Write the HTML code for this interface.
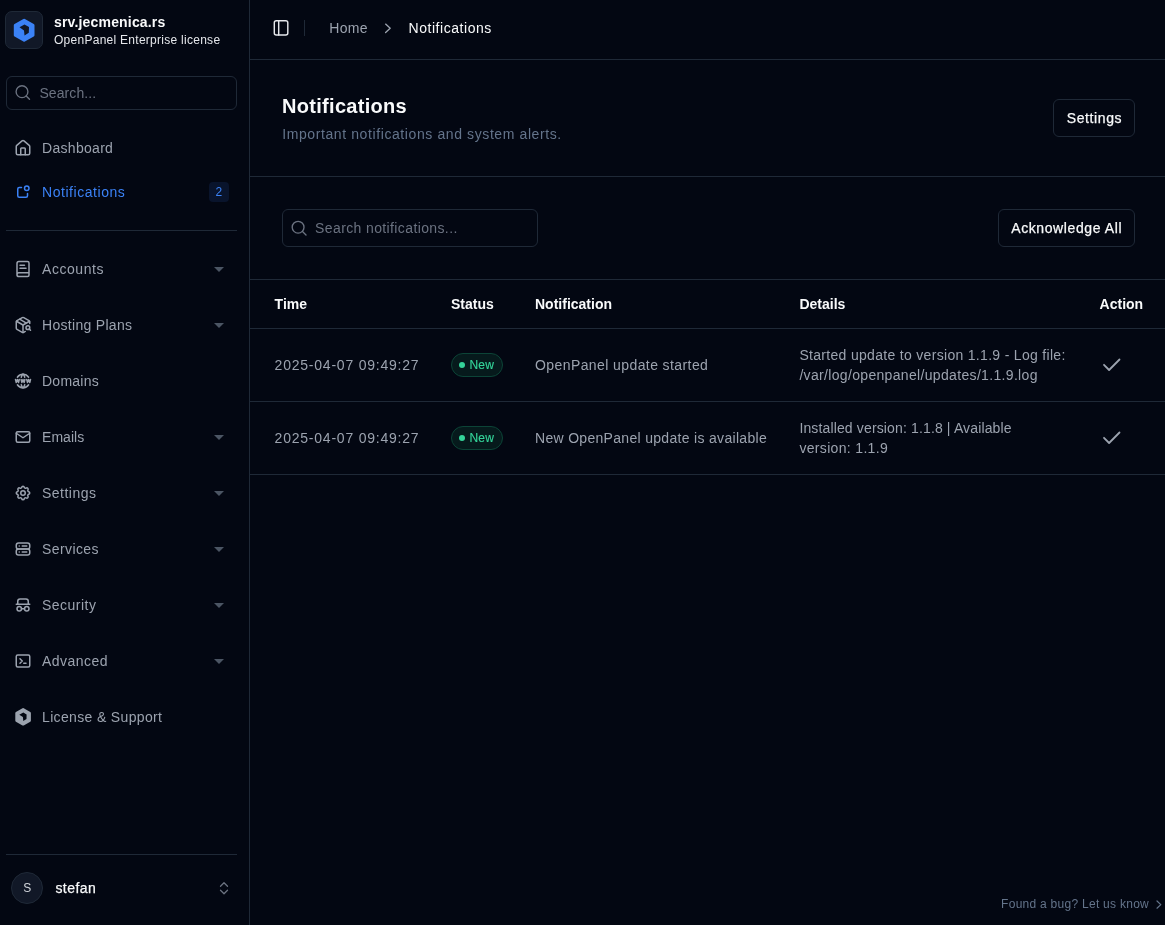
<!DOCTYPE html>
<html><head><meta charset="utf-8">
<style>
*{box-sizing:border-box;margin:0;padding:0}
html,body{width:1165px;height:925px;overflow:hidden;background:#030712;font-family:"Liberation Sans",sans-serif;color:#f9fafb}
.a{position:absolute;white-space:nowrap}
svg.i{position:absolute;width:18px;height:18px;fill:none;stroke:currentColor;stroke-width:2;stroke-linecap:round;stroke-linejoin:round}
#side{position:absolute;left:0;top:0;width:250px;height:925px;border-right:1px solid #1f2937;background:#030712}
.logo{position:absolute;left:5px;top:11px;width:38px;height:38px;border-radius:7px;background:#111827;border:1px solid #1f2937}
.brand{position:absolute;left:54px;top:13.5px;font-size:14px;font-weight:bold;color:#f9fafb;white-space:nowrap;letter-spacing:0.17px}
.brand2{position:absolute;left:54px;top:32.8px;font-size:12px;color:#e5e7eb;white-space:nowrap;letter-spacing:0.27px}
.ssearch{position:absolute;left:6px;top:76px;width:231px;height:34px;border:1px solid #1f2937;border-radius:6px}
.nav{position:absolute;left:0;width:249px;height:20px;font-size:14px;color:#9ca3af}
.nav .t{position:absolute;left:42px;top:2px;white-space:nowrap;letter-spacing:0.4px}
.car{position:absolute;left:214px;top:267px;width:0;height:0;border-left:5px solid transparent;border-right:5px solid transparent;border-top:5px solid #4b5563}
.hr{position:absolute;height:1px;background:#1f2937}
.btn{position:absolute;border:1px solid #1f2937;border-radius:6px;background:#030712}
.bt{position:absolute;font-size:14px;color:#f9fafb;white-space:nowrap;letter-spacing:0.55px;-webkit-text-stroke:0.25px #f9fafb}
.th{position:absolute;top:296.2px;font-size:14px;font-weight:bold;color:#f9fafb;white-space:nowrap}
.td{position:absolute;font-size:14px;color:#9ca3af;white-space:nowrap;letter-spacing:0.33px}
.badge{position:absolute;left:451px;width:52px;height:24px;border-radius:12px;background:#061a1c;border:1px solid #0c4437}
.badge i{position:absolute;left:7px;top:8px;width:6px;height:6px;border-radius:3px;background:#34d399}
.badge span{position:absolute;left:17.4px;top:3.9px;font-size:12px;color:#34d399;white-space:nowrap;letter-spacing:0.2px;-webkit-text-stroke:0.15px #34d399}
</style></head><body>
<div id="root" style="position:absolute;left:0;top:0;width:1165px;height:925px;will-change:transform">
<div id="side">
  <div class="logo"></div>
  <div class="brand">srv.jecmenica.rs</div>
  <div class="brand2">OpenPanel Enterprise license</div>
  <div class="ssearch"></div>
  <div class="a" style="left:39.4px;top:84.6px;font-size:14px;color:#6b7280;letter-spacing:0.1px">Search...</div>
  <div class="nav" style="top:138px"><span class="t" style="letter-spacing:0.3px">Dashboard</span></div>
  <div class="nav" style="top:182px;color:#3b82f6"><span class="t" style="letter-spacing:0.55px">Notifications</span></div>
  <div class="a" style="left:209px;top:182px;width:20px;height:20px;border-radius:4px;background:#09142c"></div>
  <div class="a" style="left:215.5px;top:184.6px;font-size:12px;color:#3b82f6">2</div>
  <div class="hr" style="left:6px;top:230px;width:231px"></div>
  <div class="nav" style="top:259px"><span class="t" style="letter-spacing:0.55px">Accounts</span></div>
  <div class="nav" style="top:315px"><span class="t" style="letter-spacing:0.3px">Hosting Plans</span></div>
  <div class="nav" style="top:371px"><span class="t" style="letter-spacing:0.25px">Domains</span></div>
  <div class="nav" style="top:427px"><span class="t" style="letter-spacing:0.05px">Emails</span></div>
  <div class="nav" style="top:483px"><span class="t" style="letter-spacing:0.48px">Settings</span></div>
  <div class="nav" style="top:539px"><span class="t" style="letter-spacing:0.4px">Services</span></div>
  <div class="nav" style="top:595px"><span class="t" style="letter-spacing:0.48px">Security</span></div>
  <div class="nav" style="top:651px"><span class="t" style="letter-spacing:0.48px">Advanced</span></div>
  <div class="nav" style="top:707px"><span class="t" style="letter-spacing:0.35px">License &amp; Support</span></div>
  <i class="car" style="top:267px"></i>
  <i class="car" style="top:323px"></i>
  <i class="car" style="top:435px"></i>
  <i class="car" style="top:491px"></i>
  <i class="car" style="top:547px"></i>
  <i class="car" style="top:603px"></i>
  <i class="car" style="top:659px"></i>
  <div class="hr" style="left:6px;top:854px;width:231px"></div>
  <div class="a" style="left:11px;top:872px;width:32px;height:32px;border-radius:16px;background:#111827;border:1px solid #1f2937"></div>
  <div class="a" style="left:23.3px;top:881px;font-size:12px;color:#d1d5db">S</div>
  <div class="a" style="left:55.4px;top:880px;font-size:14px;color:#f9fafb;letter-spacing:0.45px;-webkit-text-stroke:0.25px #f9fafb">stefan</div>
</div>

<!-- main -->
<div class="hr" style="left:250px;top:59px;width:915px"></div>
<div class="a" style="left:304px;top:20px;width:1px;height:16px;background:#1f2937"></div>
<div class="a" style="left:329.3px;top:20.2px;font-size:14px;color:#9ca3af;letter-spacing:0.3px">Home</div>
<div class="a" style="left:408.5px;top:20.2px;font-size:14px;color:#f9fafb;letter-spacing:0.55px">Notifications</div>
<div class="a" style="left:282px;top:94.6px;font-size:20px;font-weight:bold;color:#f9fafb;letter-spacing:0.3px">Notifications</div>
<div class="a" style="left:282.2px;top:126.2px;font-size:14px;color:#64748b;letter-spacing:0.6px">Important notifications and system alerts.</div>
<div class="btn" style="left:1053px;top:99px;width:82px;height:38px"></div>
<div class="bt" style="left:1066.8px;top:109.5px;letter-spacing:0.6px">Settings</div>
<div class="hr" style="left:250px;top:176px;width:915px"></div>
<div class="a" style="left:282px;top:209px;width:256px;height:38px;border:1px solid #1f2937;border-radius:6px"></div>
<div class="a" style="left:315.1px;top:220.2px;font-size:14px;color:#6b7280;letter-spacing:0.38px">Search notifications...</div>
<div class="btn" style="left:998px;top:209px;width:137px;height:38px"></div>
<div class="bt" style="left:1011.2px;top:219.5px;letter-spacing:0.6px">Acknowledge All</div>
<div class="hr" style="left:250px;top:279px;width:915px"></div>
<div class="th" style="left:274.6px">Time</div>
<div class="th" style="left:451px">Status</div>
<div class="th" style="left:535px">Notification</div>
<div class="th" style="left:799.4px">Details</div>
<div class="th" style="left:1099.6px">Action</div>
<div class="hr" style="left:250px;top:328px;width:915px"></div>
<div class="td" style="left:274.6px;top:356.6px;letter-spacing:0.78px">2025-04-07 09:49:27</div>
<div class="badge" style="top:353px"><i></i><span>New</span></div>
<div class="td" style="left:535px;top:356.6px;letter-spacing:0.41px">OpenPanel update started</div>
<div class="td" style="left:799.4px;top:346.8px;letter-spacing:0.31px">Started update to version 1.1.9 - Log file:</div>
<div class="td" style="left:799.4px;top:366.8px;letter-spacing:0.33px">/var/log/openpanel/updates/1.1.9.log</div>
<div class="hr" style="left:250px;top:401px;width:915px"></div>
<div class="td" style="left:274.6px;top:429.6px;letter-spacing:0.78px">2025-04-07 09:49:27</div>
<div class="badge" style="top:426px"><i></i><span>New</span></div>
<div class="td" style="left:535px;top:429.6px;letter-spacing:0.31px">New OpenPanel update is available</div>
<div class="td" style="left:799.4px;top:419.8px;letter-spacing:0.14px">Installed version: 1.1.8 | Available</div>
<div class="td" style="left:799.4px;top:439.8px;letter-spacing:0.33px">version: 1.1.9</div>
<div class="hr" style="left:250px;top:474px;width:915px"></div>
<div class="a" style="left:1001.1px;top:896.6px;font-size:12px;color:#64748b;letter-spacing:0.27px">Found a bug? Let us know</div>

<!-- ICONS -->
<svg class="a" style="left:0;top:0" width="1165" height="925" viewBox="0 0 1165 925" fill="none" stroke-linecap="round" stroke-linejoin="round">
  <!-- logo hexagon -->
  <path d="M24.15 20.2 L33 25.2 L33 35.3 L24.15 40.3 L15.3 35.3 L15.3 25.2 Z" fill="#3b82f6" stroke="#3b82f6" stroke-width="3"/>
  <path d="M19.5 27.3 L24.5 24.4 L29 27 L28.8 32.8 L24.5 35.6 L24 30.4 Z" fill="#111827"/>
  <!-- sidebar search -->
  <circle cx="22" cy="91.7" r="5.9" stroke="#6b7280" stroke-width="1.35"/>
  <path d="M26.2 96 L29.5 99.3" stroke="#6b7280" stroke-width="1.4"/>
  <!-- panel toggle -->
  <rect x="274.3" y="20.8" width="13.5" height="14.2" rx="2" stroke="#e5e7eb" stroke-width="1.45"/>
  <path d="M278.7 20.8 V35" stroke="#e5e7eb" stroke-width="1.45"/>
  <!-- breadcrumb chevron -->
  <path d="M385.6 24.1 L390.2 28.3 L385.6 32.5" stroke="#9ca3af" stroke-width="1.35"/>
  <!-- table search -->
  <circle cx="298.1" cy="227.2" r="5.9" stroke="#6b7280" stroke-width="1.35"/>
  <path d="M302.5 231.6 L306 235.1" stroke="#6b7280" stroke-width="1.4"/>
  <!-- checks -->
  <path d="M1104 364.8 L1109.1 370 L1119.5 359.5" stroke="#9ca3af" stroke-width="1.8"/>
  <path d="M1104 437.8 L1109.1 443 L1119.5 432.5" stroke="#9ca3af" stroke-width="1.8"/>
  <!-- chevrons up-down -->
  <path d="M220.5 886.3 L224 882.8 L227.5 886.3 M220.5 890.2 L224 893.7 L227.5 890.2" stroke="#6b7280" stroke-width="1.3"/>
  <!-- footer chevron -->
  <path d="M1157 901 L1160.8 904.6 L1157 908.2" stroke="#64748b" stroke-width="1.2"/>
  <!-- license hex -->
  <path d="M23.1 709.25 L29.65 713.03 L29.65 720.58 L23.1 724.35 L16.55 720.58 L16.55 713.03 Z" fill="#9ca3af" stroke="#9ca3af" stroke-width="2.5"/>
  <path d="M19.3 714.8 L23.3 712.6 L26.6 714.5 L26.5 719 L23.3 721.1 L22.9 717.1 Z" fill="#030712"/>
</svg>
<!-- nav icons -->
<svg class="i" viewBox="0 0 24 24" style="left:14px;top:138.7px;color:#9ca3af"><path d="M15 21v-8a1 1 0 0 0-1-1h-4a1 1 0 0 0-1 1v8"/><path d="M3 10a2 2 0 0 1 .709-1.528l7-5.999a2 2 0 0 1 2.582 0l7 5.999A2 2 0 0 1 21 10v9a2 2 0 0 1-2 2H5a2 2 0 0 1-2-2z"/></svg>
<svg class="i" viewBox="0 0 24 24" style="left:14px;top:182.75px;color:#3b82f6"><path d="M10 6h-3a2 2 0 0 0 -2 2v9a2 2 0 0 0 2 2h9a2 2 0 0 0 2 -2v-3"/><circle cx="17" cy="7" r="3"/></svg>
<svg class="i" viewBox="0 0 24 24" style="left:14px;top:260px;color:#9ca3af"><path d="M4 19.5v-15A2.5 2.5 0 0 1 6.5 2H18a2 2 0 0 1 2 2v16a2 2 0 0 1-2 2H6.5a2.5 2.5 0 0 1 0-5H20"/><path d="M8 11h8"/><path d="M8 7h6"/></svg>
<svg class="i" viewBox="0 0 24 24" style="left:14px;top:316px;color:#9ca3af"><path d="M21 10V8a2 2 0 0 0-1-1.73l-7-4a2 2 0 0 0-2 0l-7 4A2 2 0 0 0 3 8v8a2 2 0 0 0 1 1.73l7 4a2 2 0 0 0 2 0l2-1.14"/><path d="m7.5 4.27 9 5.15"/><path d="M3.29 7 12 12l8.71-5"/><path d="M12 22V12"/><circle cx="18.5" cy="15.5" r="2.5"/><path d="M20.27 17.27 22 19"/></svg>
<svg class="i" viewBox="0 0 24 24" style="left:14px;top:372px;color:#9ca3af"><path d="M19.5 7a9 9 0 0 0 -7.5 -4a8.991 8.991 0 0 0 -7.484 4"/><path d="M11.5 3a16.989 16.989 0 0 0 -1.826 4"/><path d="M12.5 3a16.989 16.989 0 0 1 1.828 4"/><path d="M19.5 17a9 9 0 0 1 -7.5 4a8.991 8.991 0 0 1 -7.484 -4"/><path d="M11.5 21a16.989 16.989 0 0 1 -1.826 -4"/><path d="M12.5 21a16.989 16.989 0 0 0 1.828 -4"/><path d="M2 10l1 4l1.5 -4l1.5 4l1 -4"/><path d="M17 10l1 4l1.5 -4l1.5 4l1 -4"/><path d="M9.5 10l1 4l1.5 -4l1.5 4l1 -4"/></svg>
<svg class="i" viewBox="0 0 24 24" style="left:14px;top:428px;color:#9ca3af"><path d="M3 7a2 2 0 0 1 2 -2h14a2 2 0 0 1 2 2v10a2 2 0 0 1 -2 2h-14a2 2 0 0 1 -2 -2v-10z"/><path d="M3 7l9 6l9 -6"/></svg>
<svg class="i" viewBox="0 0 24 24" style="left:14px;top:484px;color:#9ca3af"><path d="M10.325 4.317c.426 -1.756 2.924 -1.756 3.35 0a1.724 1.724 0 0 0 2.573 1.066c1.543 -.94 3.31 .826 2.37 2.37a1.724 1.724 0 0 0 1.065 2.572c1.756 .426 1.756 2.924 0 3.35a1.724 1.724 0 0 0 -1.066 2.573c.94 1.543 -.826 3.31 -2.37 2.37a1.724 1.724 0 0 0 -2.572 1.065c-.426 1.756 -2.924 1.756 -3.35 0a1.724 1.724 0 0 0 -2.573 -1.066c-1.543 .94 -3.31 -.826 -2.37 -2.37a1.724 1.724 0 0 0 -1.065 -2.572c-1.756 -.426 -1.756 -2.924 0 -3.35a1.724 1.724 0 0 0 1.066 -2.573c-.94 -1.543 .826 -3.31 2.37 -2.37c1 .608 2.296 .07 2.572 -1.065z"/><circle cx="12" cy="12" r="3"/></svg>
<svg class="i" viewBox="0 0 24 24" style="left:14px;top:540px;color:#9ca3af"><path d="M3 7a3 3 0 0 1 3 -3h12a3 3 0 0 1 3 3v2a3 3 0 0 1 -3 3h-12a3 3 0 0 1 -3 -3z"/><path d="M3 15a3 3 0 0 1 3 -3h12a3 3 0 0 1 3 3v2a3 3 0 0 1 -3 3h-12a3 3 0 0 1 -3 -3z"/><path d="M7 8v.01"/><path d="M7 16v.01"/><path d="M11 8h6"/><path d="M11 16h6"/></svg>
<svg class="i" viewBox="0 0 24 24" style="left:14px;top:596px;color:#9ca3af"><path d="M3 11h18"/><path d="M5 11v-4a3 3 0 0 1 3 -3h8a3 3 0 0 1 3 3v4"/><circle cx="7" cy="17" r="3"/><circle cx="17" cy="17" r="3"/><path d="M10 17h4"/></svg>
<svg class="i" viewBox="0 0 24 24" style="left:14px;top:652px;color:#9ca3af"><path d="M8 9l3 3l-3 3"/><path d="M13 15l3 0"/><path d="M3 6a2 2 0 0 1 2 -2h14a2 2 0 0 1 2 2v12a2 2 0 0 1 -2 2h-14a2 2 0 0 1 -2 -2z"/></svg>
</div>
</body></html>
